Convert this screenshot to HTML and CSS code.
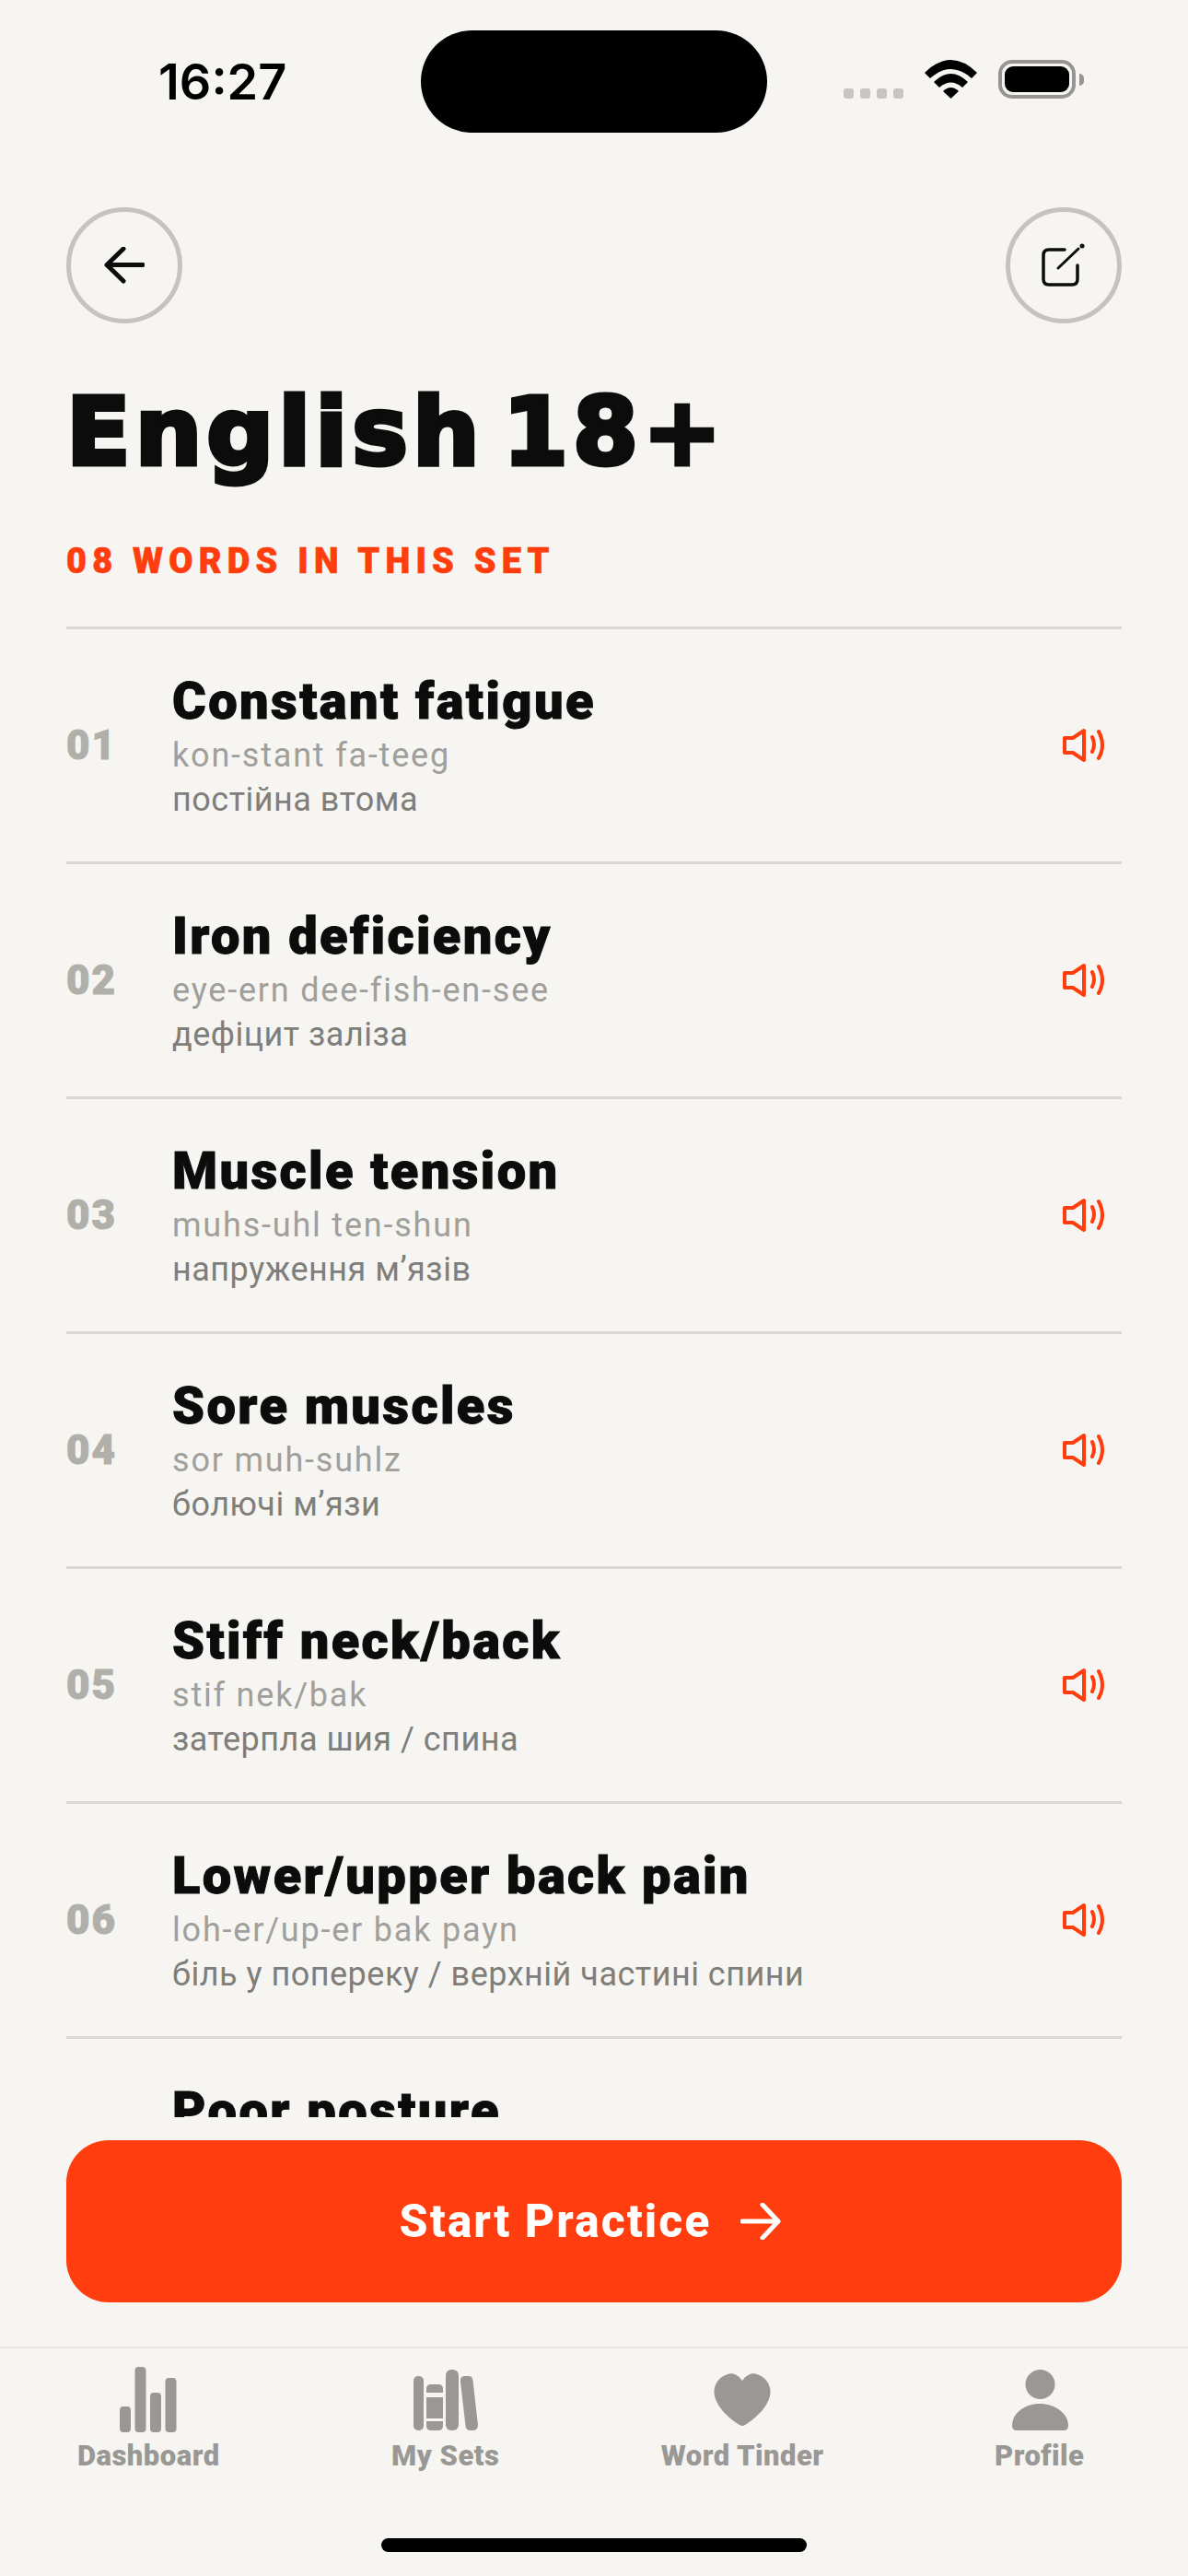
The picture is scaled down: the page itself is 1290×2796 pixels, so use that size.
FILE: index.html
```html
<!doctype html>
<html lang="en">
    <head>
        <meta charset="UTF-8" />
        <meta name="viewport" content="width=device-width, initial-scale=1.0" />
        <title>English 18+</title>
        <link rel="stylesheet" href="styles.css">
    </head>
    <body>
        <svg class="defs" width="0" height="0">
            <symbol id="speaker" viewBox="0 0 46 38">
                <path d="M3 11H12L24 3V35L12 27H3Z" fill="none" stroke="currentColor" stroke-width="4" stroke-linejoin="round" />
                <path d="M33 10Q37 18 33 26M40 4Q48 19 40 33" fill="none" stroke="currentColor" stroke-width="4" stroke-linecap="round" />
            </symbol>
        </svg>

        <div class="screen">
            <!-- Status bar -->
            <div class="status-bar">
                <span class="clock">16:27</span>
                <div class="island"></div>
                <div class="status-icons">
                    <div class="signal">
                        <span></span><span></span><span></span><span></span>
                    </div>
                    <svg class="wifi" width="57" height="42" viewBox="0 0 57 42">
                        <path d="M0 14Q28.500 -14 57 14L51 20Q28.500 0 6 20Z" />
                        <path d="M10 24Q28.500 6 47 24L41 30Q28.500 19 16 30Z" />
                        <path d="M20 34Q28.500 26 37 34L28.500 42Z" />
                    </svg>
                    <div class="battery">
                        <div class="battery-fill"></div>
                    </div>
                    <div class="battery-nub"></div>
                </div>
            </div>

            <!-- Back and edit -->
            <div class="top-actions">
                <button class="round-btn">
                    <svg width="44" height="40" viewBox="0 0 44 40">
                        <path d="M42 19.500H3M21 2L3 19.500L21 37" fill="none" stroke="#0c0c0c" stroke-width="5" stroke-linecap="round" stroke-linejoin="round" />
                    </svg>
                </button>
                <button class="round-btn">
                    <svg width="48" height="48" viewBox="0 0 48 48">
                        <path d="M25 7H8Q2 7 2 13V39Q2 45 8 45H33Q39 45 39 39V24" fill="none" stroke="#0c0c0c" stroke-width="3.500" stroke-linecap="round" />
                        <path d="M18 27L40 6" fill="none" stroke="#0c0c0c" stroke-width="3" stroke-linecap="round" />
                        <circle cx="44" cy="3" r="2.500" fill="#0c0c0c" />
                    </svg>
                </button>
            </div>

            <h1 class="set-title">English 18+</h1>
            <p class="set-count">08 WORDS IN THIS SET</p>

            <!-- Word list -->
            <div class="word-list">
                <div class="word-row">
                    <span class="word-num">01</span>
                    <div class="word-text">
                        <div class="word">Constant fatigue</div>
                        <div class="phonetic">kon-stant fa-teeg</div>
                        <div class="translation">постійна втома</div>
                    </div>
                    <svg class="speaker"><use href="#speaker" /></svg>
                </div>
                <div class="word-row">
                    <span class="word-num">02</span>
                    <div class="word-text">
                        <div class="word">Iron deficiency</div>
                        <div class="phonetic">eye-ern dee-fish-en-see</div>
                        <div class="translation">дефіцит заліза</div>
                    </div>
                    <svg class="speaker"><use href="#speaker" /></svg>
                </div>
                <div class="word-row">
                    <span class="word-num">03</span>
                    <div class="word-text">
                        <div class="word">Muscle tension</div>
                        <div class="phonetic">muhs-uhl ten-shun</div>
                        <div class="translation">напруження м’язів</div>
                    </div>
                    <svg class="speaker"><use href="#speaker" /></svg>
                </div>
                <div class="word-row">
                    <span class="word-num">04</span>
                    <div class="word-text">
                        <div class="word">Sore muscles</div>
                        <div class="phonetic">sor muh-suhlz</div>
                        <div class="translation">болючі м’язи</div>
                    </div>
                    <svg class="speaker"><use href="#speaker" /></svg>
                </div>
                <div class="word-row">
                    <span class="word-num">05</span>
                    <div class="word-text">
                        <div class="word">Stiff neck/back</div>
                        <div class="phonetic">stif nek/bak</div>
                        <div class="translation">затерпла шия / спина</div>
                    </div>
                    <svg class="speaker"><use href="#speaker" /></svg>
                </div>
                <div class="word-row">
                    <span class="word-num">06</span>
                    <div class="word-text">
                        <div class="word">Lower/upper back pain</div>
                        <div class="phonetic">loh-er/up-er bak payn</div>
                        <div class="translation">біль у попереку / верхній частині спини</div>
                    </div>
                    <svg class="speaker"><use href="#speaker" /></svg>
                </div>
                <!-- only the top of this row shows above the button -->
                <div class="word-row cut-off">
                    <div class="word">Poor posture</div>
                </div>
            </div>

            <!-- Start button -->
            <div class="practice-wrap">
                <button class="practice-btn">
                    Start Practice
                    <svg width="44" height="40" viewBox="0 0 44 40">
                        <path d="M2 20H41M24 2L41 20L24 38" fill="none" stroke="#fff" stroke-width="5" stroke-linecap="round" stroke-linejoin="round" />
                    </svg>
                </button>
            </div>

            <!-- Tab bar -->
            <div class="tab-bar">
                <div class="tab">
                    <svg class="tab-icon" viewBox="0 0 80 76">
                        <rect x="9" y="45" width="12" height="28" rx="4" />
                        <rect x="25.500" y="2" width="12" height="71" rx="4" />
                        <rect x="42" y="30" width="12" height="43" rx="4" />
                        <rect x="58.500" y="14" width="12" height="59" rx="4" />
                    </svg>
                    <span>Dashboard</span>
                </div>
                <div class="tab">
                    <svg class="tab-icon" viewBox="0 0 80 76">
                        <rect x="5" y="12" width="11" height="59" rx="5" />
                        <path d="M19 30V26Q19 21 24 21H32Q37 21 37 26V30Z" />
                        <rect x="19" y="35" width="18" height="23" />
                        <path d="M19 61H37V66Q37 71 32 71H24Q19 71 19 66Z" />
                        <rect x="40" y="5" width="14" height="66" rx="6" />
                        <path d="M56 18Q55.500 12 61 12H65Q69 12 69.500 17L75 65Q75 71 69 71H67Q62 71 61.500 66Z" />
                    </svg>
                    <span>My Sets</span>
                </div>
                <div class="tab">
                    <svg class="tab-icon" viewBox="0 0 80 76">
                        <path d="M40 17C35 10 29 8 24 10C14 13 9 22 9.500 30C10 43 24 57 37 65Q40 67 43 65C56 57 70 43 70.500 30C71 22 66 13 56 10C51 8 45 10 40 17Z" />
                    </svg>
                    <span>Word Tinder</span>
                </div>
                <div class="tab">
                    <svg class="tab-icon" viewBox="0 0 80 76">
                        <circle cx="40.500" cy="21" r="16" />
                        <path d="M10 66C10 52 24 42 40 42C56 42 71 52 71 66Q71 71 66 71H15Q10 71 10 66Z" />
                    </svg>
                    <span>Profile</span>
                </div>
            </div>

            <div class="home-row">
                <div class="home-bar"></div>
            </div>
        </div>
    </body>
</html>
```

FILE: styles.css
```css
body {
    margin: 0;
    background-color: #f6f5f1;
    font-family: Roboto, Arial, sans-serif;
}
.defs {
    display: block;
    height: 0;
}
.screen {
    height: 2796px;
    display: flex;
    flex-direction: column;
    overflow: hidden;
}

/* status bar */
.status-bar {
    height: 111px;
    margin-top: 33px;
    flex-shrink: 0;
    display: flex;
}
.clock {
    width: 457px;
    padding: 26px 0 0 172px;
    box-sizing: border-box;
    font-family: Inter, sans-serif;
    font-size: 54px;
    line-height: 60px;
    font-weight: 600;
    color: #000;
}
.island {
    width: 376px;
    height: 111px;
    background-color: #000;
    border-radius: 56px;
}
.status-icons {
    display: flex;
    align-items: flex-start;
    padding: 32px 0 0 83px;
}
.signal {
    display: flex;
    gap: 7px;
    margin: 31px 23px 0 0;
}
.signal span {
    width: 11px;
    height: 11px;
    background-color: #c6c5c0;
    border-radius: 3px;
}
.wifi {
    fill: #000;
    margin-right: 23px;
}
.battery {
    width: 84px;
    height: 42px;
    box-sizing: border-box;
    padding: 3px;
    border: 4px solid #969591;
    border-radius: 15px;
}
.battery-fill {
    height: 100%;
    background-color: #000;
    border-radius: 9px;
}
.battery-nub {
    width: 5px;
    height: 13px;
    margin: 15px 0 0 4px;
    background-color: #969591;
    border-radius: 0 5px 5px 0;
}

/* top buttons */
.top-actions {
    margin-top: 81px;
    padding: 0 72px;
    flex-shrink: 0;
    display: flex;
    justify-content: space-between;
}
.round-btn {
    width: 126px;
    height: 126px;
    padding: 0;
    background: none;
    border: 5px solid #c4c3be;
    border-radius: 50%;
    display: flex;
    align-items: center;
    justify-content: center;
}

/* heading */
.set-title {
    margin: 50px 0 0 72px;
    font-family: "DejaVu Sans", sans-serif;
    font-size: 102px;
    line-height: 136px;
    font-weight: 700;
    letter-spacing: 5px;
    word-spacing: -20px;
    -webkit-text-stroke: 5px #0c0c0c;
    color: #0c0c0c;
}
.set-count {
    margin: 50px 0 0 72px;
    font-size: 38px;
    line-height: 44px;
    font-weight: 900;
    letter-spacing: 6.200px;
    -webkit-text-stroke: 0.600px #ff3d0e;
    color: #ff3d0e;
}

/* list */
.word-list {
    flex: 1;
    min-height: 0;
    margin: 49px 72px 0;
    overflow: hidden;
    border-top: 3px solid #d8d7d2;
}
.word-row {
    height: 252px;
    border-bottom: 3px solid #d8d7d2;
    display: flex;
    align-items: center;
}
.word-row.cut-off {
    align-items: flex-start;
    padding: 45px 0 0 115px;
}
.word-num {
    width: 115px;
    flex-shrink: 0;
    font-size: 44px;
    font-weight: 900;
    letter-spacing: 2px;
    -webkit-text-stroke: 1px #b0afaa;
    color: #b0afaa;
}
.word-text {
    flex: 1;
}
.word {
    font-size: 56px;
    line-height: 66px;
    font-weight: 900;
    letter-spacing: 2.400px;
    -webkit-text-stroke: 1px #0c0c0c;
    color: #0c0c0c;
}
.phonetic {
    margin-top: 4px;
    font-size: 36px;
    line-height: 44px;
    letter-spacing: 1.800px;
    color: #a09f9b;
}
.translation {
    margin-top: 4px;
    font-size: 36px;
    line-height: 44px;
    letter-spacing: 0.500px;
    color: #7f7e7b;
}
.speaker {
    width: 46px;
    height: 38px;
    margin-right: 19px;
    flex-shrink: 0;
    color: #ff3d0e;
}

/* practice button */
.practice-wrap {
    padding: 25px 72px 48px;
    flex-shrink: 0;
}
.practice-btn {
    width: 100%;
    height: 176px;
    padding: 0 8px 0 0;
    background-color: #ff3d0e;
    border: none;
    border-radius: 46px;
    color: #fff;
    font-family: Roboto, Arial, sans-serif;
    font-size: 50px;
    font-weight: 800;
    letter-spacing: 2px;
    display: flex;
    align-items: center;
    justify-content: center;
    gap: 32px;
}

/* tabs */
.tab-bar {
    height: 208px;
    flex-shrink: 0;
    box-sizing: border-box;
    padding-top: 18px;
    border-top: 2px solid #e8e7e3;
    display: grid;
    grid-template-columns: repeat(4, 1fr);
}
.tab {
    display: flex;
    flex-direction: column;
    align-items: center;
    color: #999895;
    font-size: 31px;
    line-height: 36px;
    font-weight: 900;
    letter-spacing: 0.500px;
}
.tab-icon {
    width: 80px;
    height: 76px;
    fill: #999895;
    margin-bottom: 5px;
}
.home-row {
    height: 41px;
    flex-shrink: 0;
    display: flex;
    justify-content: center;
}
.home-bar {
    width: 462px;
    height: 15px;
    background-color: #000;
    border-radius: 8px;
}
```
